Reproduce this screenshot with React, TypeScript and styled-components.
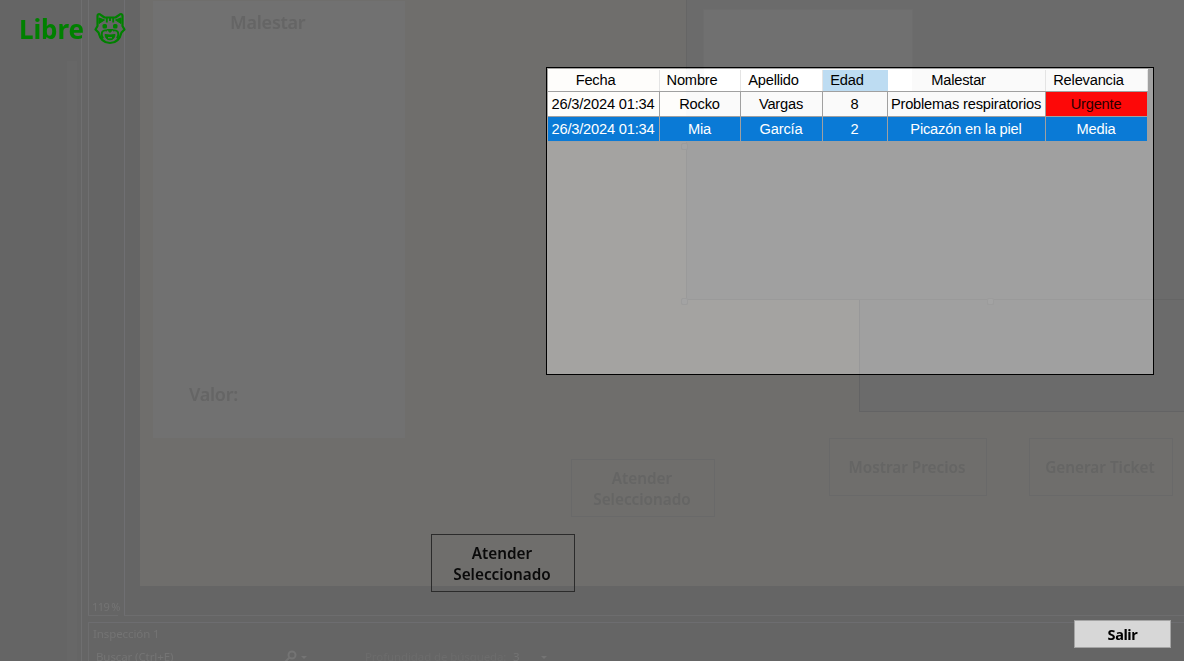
import React from "react";
import styled, { createGlobalStyle, css } from "styled-components";

const GlobalStyle = createGlobalStyle`
  * { box-sizing: border-box; }
  body { margin: 0; background: #656565; overflow: hidden; }
`;

const ui = `"Noto Sans", "Open Sans", sans-serif`;

const Screen = styled.main`
  position: relative;
  width: 1184px;
  height: 661px;
  overflow: hidden;
  background: #656565;
  font-family: ${ui};
`;

/* ---------- editor seen through the translucent window ---------- */

const Editor = styled.div`
  display: flex;
  height: 100%;
  color: #747474;
`;

const Explorer = styled.div`
  display: flex;
  justify-content: flex-end;
  width: 82px;
  padding: 61px 4px 0 0;
  border-right: 1px solid #6f6f70;
`;

const ScrollTrack = styled.div`
  width: 10px;
  background: #676767;
`;

const Workspace = styled.div`
  display: flex;
  flex-direction: column;
  flex: 1;
  gap: 6px;
  margin-left: 6px;
`;

const Documents = styled.div`
  display: flex;
  flex: none;
  height: 616px;
`;

const Gutter = styled.div`
  display: flex;
  align-items: flex-end;
  width: 30px;
  margin-right: 6px;
  padding: 0 0 1px 3px;
  border-left: 1px solid #6f6f70;
  border-bottom: 1px solid #6d6d6e;
  font-size: 11px;
  line-height: 15px;
  letter-spacing: -0.6px;
  white-space: nowrap;
`;

const Designer = styled.div`
  flex: 1;
  padding-left: 15px;
  border-left: 1px solid #6f6f72;
  border-bottom: 1px solid #6d6d6e;
`;

const Canvas = styled.div`
  position: relative;
  height: 586px;
  overflow: hidden;
  background: #6f6e6c;
`;

const Box = styled.div<{ x: number; y: number; w: number; h: number; fill?: string; line?: string }>`
  position: absolute;
  left: ${(p) => p.x}px;
  top: ${(p) => p.y}px;
  width: ${(p) => p.w}px;
  height: ${(p) => p.h}px;
  background: ${(p) => p.fill ?? "transparent"};
  border: 1px solid ${(p) => p.line ?? "transparent"};
`;

const GhostLabel = styled.span<{ x: number; y: number }>`
  position: absolute;
  left: ${(p) => p.x}px;
  top: ${(p) => p.y}px;
  color: #656565;
  font-size: 18px;
  font-weight: 600;
  line-height: 24px;
  letter-spacing: -0.25px;
`;

const buttonText = css`
  display: flex;
  align-items: center;
  justify-content: center;
  font-family: ${ui};
  font-size: 15.3px;
  font-weight: 600;
  line-height: 21px;
  text-align: center;
`;

const GhostButton = styled(Box)`
  ${buttonText}
  padding: 1px 2px 0 0;
  border-color: #696969;
  color: #656564;
`;

const Handle = styled.i<{ x: number; y: number }>`
  position: absolute;
  left: ${(p) => p.x}px;
  top: ${(p) => p.y}px;
  width: 7px;
  height: 7px;
  border: 1px solid #676767;
  border-radius: 2px;
  background: #6e6e6e;
`;

const Watch = styled.div`
  flex: 1;
  min-height: 0;
  padding: 3px 0 0 4px;
  border-top: 1px solid #6d6d70;
  border-left: 1px solid #6d6d6e;
  font-size: 11.5px;
  line-height: 16px;
  letter-spacing: -0.1px;
`;

const WatchBar = styled.div`
  display: flex;
  align-items: center;
  height: 18px;
  margin-top: 6px;
  padding-left: 3px;
`;

const SearchHint = styled.span`
  width: 187px;
`;

const Depth = styled.span`
  width: 140px;
  margin-left: 56px;
  white-space: nowrap;
  color: #6c6c6c;
`;

const DepthValue = styled.span`
  display: flex;
  align-items: center;
  gap: 21px;
  margin-left: 8px;
`;

/* ---------- foreground window ---------- */

const Window = styled.div`
  position: absolute;
  inset: 0;
  display: flex;
  flex-direction: column;
`;

const Status = styled.header`
  display: flex;
  align-items: flex-start;
  height: 67px;
  padding: 11px 0 0 19px;
  color: #008000;
`;

const StatusText = styled.span`
  width: 75px;
  font-size: 26px;
  font-weight: 700;
  line-height: 36px;
  letter-spacing: -0.1px;
`;

const CatIcon = styled.svg`
  width: 33px;
  height: 34px;
`;

const PatientGrid = styled.section`
  position: relative;
  align-self: flex-end;
  width: 608px;
  height: 308px;
  margin-right: 30px;
  padding: 1px;
  border: 1px solid #000;
  font-family: "Liberation Sans", Arial, sans-serif;
  font-size: 14.67px;
  letter-spacing: -0.2px;
  color: #000;

  &::before {
    content: "";
    position: absolute;
    inset: 0;
    background: #353535;
    mix-blend-mode: plus-lighter;
  }
`;

const Row = styled.div<{ selected?: boolean }>`
  position: relative;
  display: grid;
  grid-template-columns: 112px 81px 82px 65px 158px 102px;
  width: 600px;
  height: 25px;
  color: ${(p) => (p.selected ? "#fff" : "#000")};
  background: ${(p) =>
    p.selected ? "#0a7ad6" : "linear-gradient(90deg, #fefdfb 138px, #fafafa 138px)"};
`;

const HeadRow = styled(Row)`
  height: 23px;
  padding-top: 1px;
  border-bottom: 1px solid #a0a0a0;
  background: linear-gradient(
    90deg,
    #fefdfb 138px,
    #fafafa 138px 156px,
    #fff 156px 364px,
    #fafafa 364px
  );
`;

const HeadCell = styled.div<{ active?: boolean }>`
  display: flex;
  align-items: center;
  justify-content: center;
  padding: 0 16px 1px 0;
  border-right: 1px solid ${(p) => (p.active ? "#bddcf2" : "#e4e4e4")};
  background: ${(p) => (p.active ? "#bddcf2" : "transparent")};
  white-space: nowrap;
`;

const Cell = styled.div<{ urgent?: boolean }>`
  display: flex;
  align-items: center;
  justify-content: center;
  padding-right: 1px;
  border-right: 1px solid #a0a0a0;
  border-bottom: 1px solid #a0a0a0;
  background: ${(p) => (p.urgent ? "#fd0808" : "transparent")};
  color: ${(p) => (p.urgent ? "#2a0000" : "inherit")};
  white-space: nowrap;
`;

const AttendButton = styled.button`
  ${buttonText}
  width: 144px;
  height: 58px;
  margin: 159px 0 0 431px;
  padding: 2px 2px 0 0;
  border: 1px solid #2b2b2b;
  background: transparent;
  color: #0a0a0a;
`;

const ExitButton = styled.button`
  ${buttonText}
  align-self: flex-end;
  width: 97px;
  height: 28px;
  margin: 28px 13px 0 0;
  padding: 0;
  border: 1px solid #a4a4a4;
  background: #d7d7d7;
  color: #000;
  font-size: 14.5px;
  font-weight: 700;
  letter-spacing: -0.4px;
`;

const columns = ["Fecha", "Nombre", "Apellido", "Edad", "Malestar", "Relevancia"];

const patients = [
  ["26/3/2024 01:34", "Rocko", "Vargas", "8", "Problemas respiratorios", "Urgente"],
  ["26/3/2024 01:34", "Mia", "García", "2", "Picazón en la piel", "Media"],
];

const Cat = () => (
  <CatIcon viewBox="0 0 33 34" fill="none" stroke="#008000" strokeWidth="2.2" strokeLinejoin="round">
    <path d="M3.500 15V5Q3.500 2.500 6 3.300L10.500 6.500H21.500L26 3.300Q28.500 2.500 28.500 5V15L30.500 18.500 27.500 21.500Q25 32 16 32 7 32 4.500 21.500L1.500 18.500Z" />
    <path d="M5 7 10.500 9 5 12.500ZM27 7 21.500 9 27 12.500Z" fill="#008000" strokeWidth="1" />
    <path d="M12.800 6v5.500M16 6v4M19.200 6v5.500" strokeWidth="1.900" />
    <rect x="8.500" y="13" width="4.500" height="4.500" rx="1.500" fill="#008000" stroke="none" />
    <rect x="19" y="13" width="4.500" height="4.500" rx="1.500" fill="#008000" stroke="none" />
    <path d="M13 18.500h6L16 21.500Z" fill="#008000" strokeWidth="1" />
    <path d="M13 19.500C7.500 18.500 6.500 23 9 27.500M19 19.500c5.500-1 6.500 3.500 4 8" strokeWidth="1.900" />
    <path d="M11 23.500Q16 24.500 21 23.500 20.500 28.800 16 28.800 11.500 28.800 11 23.500Z" fill="#008000" strokeWidth="1" />
    <path d="M14 26.700h4" stroke="#686868" strokeWidth="1.200" />
  </CatIcon>
);

export default function App() {
  return (
    <>
      <GlobalStyle />
      <Screen>
        <Editor>
          <Explorer>
            <ScrollTrack />
          </Explorer>
          <Workspace>
            <Documents>
              <Gutter>119 %</Gutter>
              <Designer>
                <Canvas>
                  <Box x={13} y={1} w={252} h={437} fill="#717171" />
                  <GhostLabel x={90} y={10}>Malestar</GhostLabel>
                  <GhostLabel x={49} y={382}>Valor:</GhostLabel>
                  <Box x={719} y={299} w={340} h={113} fill="#6b6b6b" line="#636364" />
                  <Box x={546} y={-1} w={520} h={301} fill="#6b6b6b" line="#656565" />
                  <Box x={563} y={9} w={210} h={85} fill="#707070" line="#6d6d6d" />
                  <Handle x={541} y={143} />
                  <Handle x={541} y={298} />
                  <Handle x={847} y={298} />
                  <GhostButton x={689} y={438} w={158} h={58}>Mostrar Precios</GhostButton>
                  <GhostButton x={889} y={438} w={144} h={58}>Generar Ticket</GhostButton>
                  <GhostButton x={431} y={459} w={144} h={58}>
                    Atender
                    <br />
                    Seleccionado
                  </GhostButton>
                </Canvas>
              </Designer>
            </Documents>
            <Watch>
              Inspección 1
              <WatchBar>
                <SearchHint>Buscar (Ctrl+E)</SearchHint>
                <svg width="26" height="14" fill="none" stroke="#747474" strokeWidth="2">
                  <circle cx="9" cy="5" r="3.500" />
                  <path d="M6.500 7.500 1 13" />
                  <path d="M18 6h6l-3 3z" fill="#747474" stroke="none" />
                </svg>
                <Depth>Profundidad de búsqueda:</Depth>
                <DepthValue>
                  3
                  <svg width="8" height="5">
                    <path d="M1 1h6L4 4z" fill="#747474" />
                  </svg>
                </DepthValue>
              </WatchBar>
            </Watch>
          </Workspace>
        </Editor>

        <Window>
          <Status>
            <StatusText>Libre</StatusText>
            <Cat />
          </Status>
          <PatientGrid>
            <HeadRow>
              {columns.map((name) => (
                <HeadCell key={name} active={name === "Edad"}>{name}</HeadCell>
              ))}
            </HeadRow>
            {patients.map((cells, i) => (
              <Row key={i} selected={i === 1}>
                {cells.map((value, c) => (
                  <Cell key={c} urgent={value === "Urgente"}>{value}</Cell>
                ))}
              </Row>
            ))}
          </PatientGrid>
          <AttendButton>
            Atender
            <br />
            Seleccionado
          </AttendButton>
          <ExitButton>Salir</ExitButton>
        </Window>
      </Screen>
    </>
  );
}
